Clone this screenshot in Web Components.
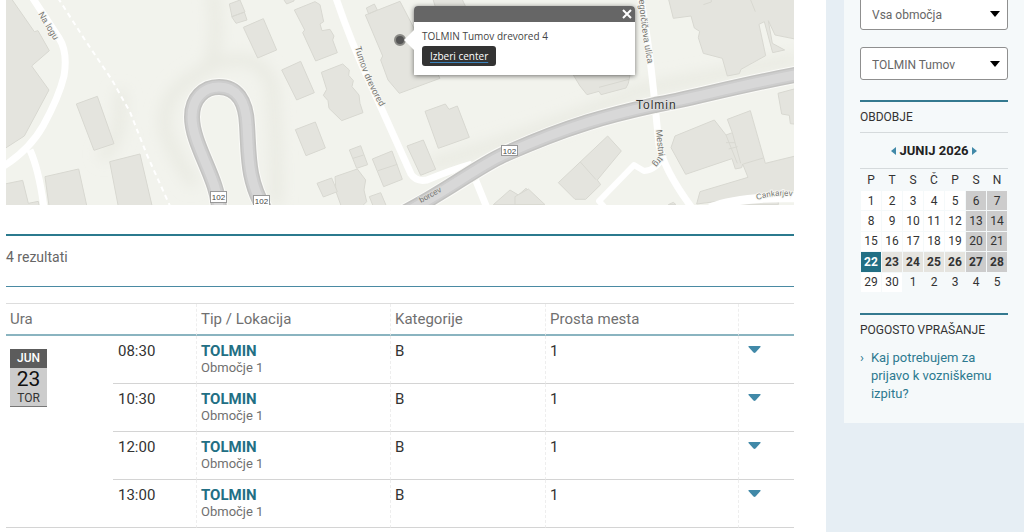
<!DOCTYPE html>
<html lang="sl">
<head>
<meta charset="utf-8">
<title>Prosti termini - Tolmin</title>
<style>
  body { margin: 0; background: #e6eef4; color: #333; font-family: Roboto, "Liberation Sans", sans-serif; font-size: 14px; }
</style>
</head>
<body>
<exam-page>
  <center-map>
    <map-popup><span>TOLMIN Tumov drevored 4</span></map-popup>
  </center-map>
  <result-count>4 rezultati</result-count>
  <exam-table></exam-table>
  <side-card slot="side">
    <filter-select label="Območje" value="Vsa območja"></filter-select>
    <filter-select label="Lokacija" value="TOLMIN Tumov"></filter-select>
    <side-section heading="OBDOBJE" class="period"><month-calendar></month-calendar></side-section>
    <side-section heading="POGOSTO VPRAŠANJE" class="faq"><faq-link>Kaj potrebujem za prijavo k vozniškemu izpitu?</faq-link></side-section>
  </side-card>
</exam-page>

<script>
function define(name, html, setup) {
  customElements.define(name, class extends HTMLElement {
    connectedCallback() {
      if (this.shadowRoot) return;
      const root = this.attachShadow({ mode: 'open' });
      root.innerHTML = html;
      if (setup) setup(root, this);
    }
  });
}

define('exam-page', `
<style>
  :host { display: grid; grid-template-columns: minmax(0, 1fr) 198px; min-height: 100vh; overflow: hidden; }
  main { background: #fff; padding: 0 32px 5px 6px; }
  aside { padding-left: 18px; }
</style>
<main><slot></slot></main>
<aside><slot name="side"></slot></aside>`);

define('center-map', `
<style>
  :host { display: block; position: relative; height: 205px; overflow: hidden; background: #f2f3ed; }
  svg { display: block; width: 100%; height: 100%; }
  text { font-family: "Liberation Sans", sans-serif; fill: #73736f; font-size: 9px; paint-order: stroke; stroke: #f7f7f3; stroke-width: 2px; }
  .on-road { stroke: #d9d9d7; font-size: 8px; }
  .small { font-size: 8px; }
  .city { font-size: 12px; fill: #333; letter-spacing: 1px; stroke: #e4e4e2; stroke-width: 1px; }
  .shield text { stroke: none; fill: #444; text-anchor: middle; font-size: 8px; }
  .shield rect { fill: #fff; stroke: #999; }
  .b { fill: #e4e4de; stroke: #d8d8d1; stroke-width: 3; }
  .road { fill: none; stroke: #fff; stroke-linejoin: round; stroke-width: 7; }
  .edge { fill: none; stroke: #fbfbf8; stroke-width: 18; }
  .case { fill: none; stroke: #c2c2c0; stroke-width: 16; }
  .mid { fill: none; stroke: #cdcdcd; stroke-width: 13; }
  .core { fill: none; stroke: #d8d8d8; stroke-width: 9; }
  slot { display: block; position: absolute; left: 398px; top: 6px; width: 231px; }
</style>
<svg viewBox="6 0 788 205" preserveAspectRatio="xMinYMin slice" role="img" aria-label="Zemljevid centra Tolmin">
  <defs>
    <filter id="soft" x="-30%" y="-30%" width="160%" height="160%"><feGaussianBlur stdDeviation="7"/></filter>
    <path id="loop" d="M219 210C219 180 192 145 192 117C192 98 204 87 219 87C236 87 246 100 247 125C249 155 247 180 265 210"/>
    <path id="main" d="M398 216C440 196 475 168 503 155C570 125 610 115 655 105C690 99 735 86 800 74"/>
    <path id="nalogu" d="M38 14L62 54"/>
    <path id="tumov" d="M355 47Q363 80 388 120"/>
    <path id="greg" d="M639 0Q641 30 650 76"/>
    <path id="cank" d="M757 200Q780 192 810 199"/>
  </defs>
  <g filter="url(#soft)" fill="none" stroke="#e9eae2" stroke-width="12">
    <path d="M212 -10Q222 45 206 70Q160 90 165 130Q175 160 195 185"/>
    <path d="M214 65Q258 48 272 85Q278 150 276 205"/>
    <path d="M120 90Q125 140 100 158"/>
    <path d="M430 165Q520 140 640 90Q720 75 800 58"/>
  </g>
  <g class="b" transform="scale(.333333)">
    <path d="M0 -10H30L103 95L114 92L148 152L95 198L147 270L73 408L0 455z"/>
    <path d="M229 312L292 289L342 431L282 451z"/>
    <path d="M329 485L420 462L458 625H356z"/>
    <path d="M135 530L236 507L262 625H148z"/>
    <path d="M0 555L68 541L85 610L115 604L118 625H0z"/>
    <path d="M688 12L720 0L735 36L696 50z M695 50L733 36L741 60L708 70z"/>
    <path d="M730 82L790 56L830 150L773 174z"/>
  </g>
  <g class="b" transform="translate(260) scale(.333333)">
    <path d="M66 -9H102V3L80 12z"/>
    <path d="M103 30L165 5L180 14L191 65L180 72L186 92L210 88L222 108L218 120L232 158L167 183L128 98L134 90z"/>
    <path d="M65 210L122 184L163 278L110 300z"/>
    <path d="M184 217L248 192L268 210L266 226L280 242L276 260L297 285L300 310L309 338L245 362L207 325L204 302L190 286L200 268z"/>
    <path d="M106 389L166 366L196 444L138 467z"/>
    <path d="M268 450L302 437L323 494L290 505z M279 475L311 465"/>
    <path d="M337 477L396 453L427 538L371 560z M354 512L412 493"/>
    <path d="M225 530L292 507L317 540L312 570L320 605L300 625H246L228 575z"/>
    <path d="M171 550L215 534L232 575L190 591z"/>
    <path d="M328 590L362 578L382 625H342z"/>
    <path d="M316 45L420 4L540 235L418 280L384 240L362 180L368 168z M319 24L343 12L352 30L326 42z"/>
    <path d="M495 334L556 312L567 328L592 318L628 412L535 445z"/>
    <path d="M441 438L490 420L527 508L482 526z"/>
    <path d="M700 614L750 570L775 585L798 565L850 614z"/>
    <path d="M518 -5H605L617 20H526z"/>
  </g>
  <g class="b" transform="translate(520) scale(.333333)">
    <path d="M445 -5L460 55L513 48L523 84L539 94L535 113L550 160L607 175L622 228L658 221L663 208L737 167L717 73L733 65L758 158L794 150L757 130L745 62L765 105L830 118V-5z"/>
    <path d="M550 14L574 6V-5M690 -5L706 35" fill="none"/>
    <path d="M160 225H330L325 250L318 264L243 284L237 274L201 284L180 258z M237 262L327 238"/>
    <path d="M774 280L830 265V373L811 371L808 346L785 342z"/>
    <path d="M465 408L583 360L618 405L637 398L622 358L691 332L736 490L830 467V575L530 612L540 575L684 532L668 492L665 503L646 507L636 476L497 523L453 443z"/>
    <path d="M618 405L652 490M637 398L662 490M670 492L730 474M618 428H645M626 447L653 440" fill="none"/>
    <path d="M263 408L304 453L232 540L242 554L197 598L165 598L115 548z M181 486L228 539"/>
    <path d="M-15 590L25 567L75 614H-15z"/>
    <path d="M445 614L460 607L468 614z M660 614L700 606L775 603V614z"/>
  </g>
  <g class="road">
    <path d="M32 -3L59 38Q68 52 64 76Q59 97 43 126Q30 149 4 166M30 150Q39 170 44 208"/>
    <path d="M58 -2L85 40L112 80L130 112L147 155L170 206" stroke-width="2" stroke-dasharray="5 4"/>
    <path d="M335 -5Q350 40 370 83L411 174Q416 182 427 180Q451 170 472 164"/>
    <path d="M474 176L487 208"/>
    <path d="M640 -5Q648 35 654 95L659 145Q664 170 692 208"/>
    <path d="M664 155Q657 170 644 171L634 165L599 201L607 210" stroke-width="6"/>
    <path d="M710 208Q740 196 800 198" stroke-width="9"/>
  </g>
  <use href="#loop" class="edge"/><use href="#loop" class="case"/><use href="#loop" class="mid"/><use href="#loop" class="core"/>
  <use href="#main" class="edge"/><use href="#main" class="case"/><use href="#main" class="mid"/><use href="#main" class="core"/>
  <text><textPath href="#nalogu">Na logu</textPath></text>
  <text><textPath href="#tumov">Tumov drevored</textPath></text>
  <text><textPath href="#greg">egorčičeva ulica</textPath></text>
  <text transform="translate(656 130) rotate(84)">Mestni</text>
  <text transform="translate(659 156) rotate(128)">trg</text>
  <text class="small"><textPath href="#cank">Cankarjev</textPath></text>
  <text class="on-road" transform="translate(421 203) rotate(-29)">borcev</text>
  <text class="city" x="636" y="109">Tolmin</text>
  <g class="shield">
    <rect x="210.500" y="191.500" width="16" height="11"/><text x="218.500" y="200">102</text>
    <rect x="253.500" y="195.500" width="16" height="11"/><text x="261.500" y="204">102</text>
    <rect x="501.500" y="145.500" width="16" height="10"/><text x="509.500" y="154">102</text>
  </g>
  <circle cx="400" cy="40" r="5" fill="#555" stroke="#8a8a86" stroke-width="2"/>
</svg>
<slot></slot>`);

define('map-popup', `
<style>
  :host { display: block; padding-left: 10px; color: #444; font: 10px/14px "Open Sans", sans-serif; position: relative; }
  .tip { position: absolute; left: 0; top: 24px; border: solid transparent; border-width: 10px 10px 10px 0; border-right-color: #fff; }
  section { background: #fff; border-radius: 4px 4px 0 0; box-shadow: 0 1px 5px #0008; height: 69px; width: 221px; }
  header { display: flex; justify-content: flex-end; background: #666; border-radius: 4px 4px 0 0; height: 16px; }
  header button { border: 0; background: none; padding: 0 3px; display: flex; align-items: center; }
  .body { padding: 7px 8px; display: flex; flex-direction: column; align-items: flex-start; gap: 3px; }
  .pick { background: #333; color: #fff; border-radius: 3px; padding: 3px 8px; text-decoration: underline #3b83bd; text-underline-offset: 2px; }
</style>
<section>
  <header><button aria-label="Zapri"><svg width="10" height="10" viewBox="0 0 10 10"><path d="M1 1L9 9M9 1L1 9" stroke="#fff" stroke-width="2"/></svg></button></header>
  <div class="body"><slot></slot><a class="pick" href="#izberi">Izberi center</a></div>
</section>
<div class="tip"></div>`);

define('result-count', `
<style>
  :host { display: block; margin: 29px 0 16px; padding: 12px 0 20px; border-top: 2px solid #2b7a8e; border-bottom: 1px solid #4a8aa3; color: #666; font-size: 14px; line-height: 18px; }
</style><slot></slot>`);

define('date-badge', `
<style>
  :host { display: block; width: 37px; background: #ccc; border-bottom: 1px solid #777; text-align: center; color: #333; font-size: 12px; line-height: 15px; }
  b { display: block; background: #5c5c5c; color: #fff; line-height: 19px; font-weight: 500; }
  strong { display: block; font-size: 21px; font-weight: 400; line-height: 23px; color: #111; }
</style>
<b>JUN</b><strong>23</strong>TOR`);

define('exam-table', `
<style>
  :host { display: block; }
  table { width: 100%; table-layout: fixed; border-collapse: separate; border-spacing: 0; border-top: 1px solid #ddd; }
  th, td { box-sizing: border-box; padding: 0 4px; text-align: left; vertical-align: top; font-weight: 400; }
  th { height: 32px; font-size: 15px; line-height: 30px; color: #707070; border-bottom: 2px solid #8ab4c0; }
  td { height: 48px; padding-top: 6px; border-bottom: 1px solid #d4d4d4; font-size: 15px; line-height: 18px; }
  th:nth-child(n+2), td:not(.date):not(.time) { border-left: 1px dashed #eee; }
  .time { padding-left: 5px; }
  .date { padding-top: 13px; }
  a { display: block; color: #226f84; font-weight: 700; text-decoration: none; }
  small { display: block; font-size: 13px; line-height: 16px; color: #707070; }
  button { border: 0; background: none; padding: 4px 5px; display: block; }
  svg { display: block; }
</style>
<table>
  <colgroup><col style="width:107px"><col style="width:83px"><col style="width:194px"><col style="width:155px"><col style="width:193px"><col style="width:56px"></colgroup>
  <thead><tr><th colspan="2">Ura</th><th>Tip / Lokacija</th><th>Kategorije</th><th>Prosta mesta</th><th></th></tr></thead>
  <tbody></tbody>
</table>`, root => {
  root.querySelector('tbody').innerHTML = ['08:30', '10:30', '12:00', '13:00'].map((t, i) => `
    <tr>${i ? '' : '<td class="date" rowspan="4"><date-badge></date-badge></td>'}
    <td class="time">${t}</td><td><a href="#tolmin">TOLMIN</a><small>Območje 1</small></td><td>B</td><td>1</td>
    <td><button aria-label="Odpri"><svg width="13" height="7" viewBox="0 0 13 7"><path d="M1 0H12Q13 0 12.500 1L7.500 6.500Q6.500 7.300 5.500 6.500L.500 1Q0 0 1 0z" fill="#4189a8"/></svg></button></td></tr>`).join('');
});

define('side-card', `
<style>
  :host { display: flex; flex-direction: column; gap: 17px; background: #f5f9fa; padding: 0 16px 20px; margin-top: -3px; }
</style><slot></slot>`);

define('filter-select', `
<style>
  :host { display: block; position: relative; }
  select { display: block; box-sizing: border-box; width: 100%; height: 33px; appearance: none; border: 1px solid #8f8f8f; border-radius: 3px; background: #fff; color: #666; font: inherit; font-size: 12px; padding: 2px 28px 0 11px; }
  svg { position: absolute; right: 8px; top: 14px; pointer-events: none; }
</style>
<select></select>
<svg width="10" height="6" viewBox="0 0 10 6"><path d="M0 0H10L5 6z" fill="#000"/></svg>`, (root, el) => {
  const s = root.querySelector('select');
  s.setAttribute('aria-label', el.getAttribute('label'));
  s.add(new Option(el.getAttribute('value')));
});

define('side-section', `
<style>
  :host { display: block; border-top: 2px solid #34798f; margin-top: 3px; }
  h2 { margin: 0; font-size: 12px; font-weight: 400; line-height: 30px; color: #333; }
  :host(.period) h2 { border-bottom: 1px solid #d5dadc; }
</style>
<h2></h2><slot></slot>`, (root, el) => { root.querySelector('h2').textContent = el.getAttribute('heading'); });

define('month-calendar', `
<style>
  :host { display: block; }
  header { display: flex; justify-content: center; align-items: center; gap: 3px; height: 35px; border-bottom: 1px solid #d5dadc; font-size: 13px; font-weight: 700; color: #222; }
  button { border: 0; background: none; padding: 0; display: flex; }
  table { width: 100%; height: 124px; table-layout: fixed; border-collapse: collapse; text-align: center; font-size: 12px; line-height: 16px; }
  th, td { padding: 0; font-weight: 400; }
  th { height: 21px; }
  td { height: 19px; border: 1px solid #f5f9fa; background: #fff; }
  .we { background: #ccc; }
  .wk td { background: #e5e4df; font-weight: 700; }
  .wk .we { background: #ccc; }
  .wk .now { background: #226f84; color: #fff; }
  td.out { background: none; }
</style>
<header><button aria-label="Prejšnji mesec"><svg width="5" height="8" viewBox="0 0 5 8"><path d="M5 0V8L0 4z" fill="#4189a8"/></svg></button>JUNIJ 2026<button aria-label="Naslednji mesec"><svg width="5" height="8" viewBox="0 0 5 8"><path d="M0 0V8L5 4z" fill="#4189a8"/></svg></button></header>
<table><thead><tr><th>P</th><th>T</th><th>S</th><th>Č</th><th>P</th><th>S</th><th>N</th></tr></thead><tbody></tbody></table>`, root => {
  let html = '';
  for (let w = 0; w < 5; w++) {
    html += w === 3 ? '<tr class="wk">' : '<tr>';
    for (let d = 0; d < 7; d++) {
      const n = w * 7 + d + 1;
      const cls = n > 30 ? 'out' : n === 22 ? 'now' : d > 4 ? 'we' : '';
      html += `<td class="${cls}">${n > 30 ? n - 30 : n}</td>`;
    }
    html += '</tr>';
  }
  root.querySelector('tbody').innerHTML = html;
});

define('faq-link', `
<style>
  :host { display: flex; gap: 7px; padding-top: 4px; font-size: 13px; line-height: 18px; color: #2d7a90; }
  a { color: inherit; text-decoration: none; max-width: 126px; }
</style>
<span>›</span><a href="#vprasanje"><slot></slot></a>`);
</script>
</body>
</html>
